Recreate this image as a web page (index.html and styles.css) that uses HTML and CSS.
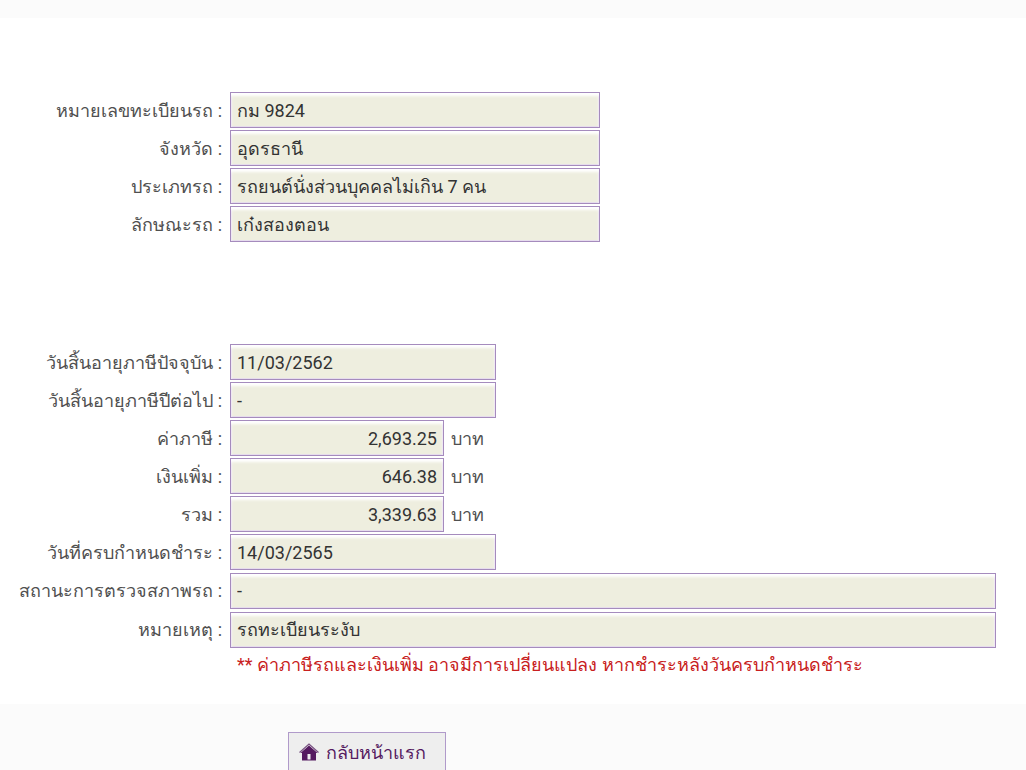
FILE: index.html
```
<!DOCTYPE html>
<html lang="th">
<head>
    <meta charset="UTF-8">
    <meta name="viewport" content="width=device-width, initial-scale=1.0">
    <title>ตรวจสอบภาษีรถ</title>
    <link rel="stylesheet" href="styles.css">
</head>
<body>
    <main class="content">
        <section class="form-section">
            <div class="form-row">
                <label for="plate">หมายเลขทะเบียนรถ :</label>
                <input class="medium" id="plate" type="text" value="กม 9824" readonly>
            </div>
            <div class="form-row">
                <label for="province">จังหวัด :</label>
                <input class="medium" id="province" type="text" value="อุดรธานี" readonly>
            </div>
            <div class="form-row">
                <label for="car-type">ประเภทรถ :</label>
                <input class="medium" id="car-type" type="text" value="รถยนต์นั่งส่วนบุคคลไม่เกิน 7 คน" readonly>
            </div>
            <div class="form-row">
                <label for="car-body">ลักษณะรถ :</label>
                <input class="medium" id="car-body" type="text" value="เก๋งสองตอน" readonly>
            </div>
        </section>

        <section class="form-section">
            <div class="form-row">
                <label for="tax-expire">วันสิ้นอายุภาษีปัจจุบัน :</label>
                <input class="date" id="tax-expire" type="text" value="11/03/2562" readonly>
            </div>
            <div class="form-row">
                <label for="tax-next">วันสิ้นอายุภาษีปีต่อไป :</label>
                <input class="date" id="tax-next" type="text" value="-" readonly>
            </div>
            <div class="form-row">
                <label for="tax">ค่าภาษี :</label>
                <input class="money" id="tax" type="text" value="2,693.25" readonly>
                <span class="unit">บาท</span>
            </div>
            <div class="form-row">
                <label for="extra">เงินเพิ่ม :</label>
                <input class="money" id="extra" type="text" value="646.38" readonly>
                <span class="unit">บาท</span>
            </div>
            <div class="form-row">
                <label for="total">รวม :</label>
                <input class="money" id="total" type="text" value="3,339.63" readonly>
                <span class="unit">บาท</span>
            </div>
            <div class="form-row">
                <label for="due-date">วันที่ครบกำหนดชำระ :</label>
                <input class="date" id="due-date" type="text" value="14/03/2565" readonly>
            </div>
            <div class="form-row wide">
                <label for="inspection">สถานะการตรวจสภาพรถ :</label>
                <input class="full" id="inspection" type="text" value="-" readonly>
            </div>
            <div class="form-row wide">
                <label for="remark">หมายเหตุ :</label>
                <input class="full" id="remark" type="text" value="รถทะเบียนระงับ" readonly>
            </div>
            <p class="notice">** ค่าภาษีรถและเงินเพิ่ม อาจมีการเปลี่ยนแปลง หากชำระหลังวันครบกำหนดชำระ</p>
        </section>
    </main>

    <div class="actions">
        <button class="home-btn" type="button">
            <svg class="home-icon" viewBox="0 0 20 18" aria-hidden="true">
                <path d="M0.5 9.5 L10 1 L19.5 9.5" fill="none" stroke="#775080" stroke-width="1.2"/>
                <path d="M1.5 10 L10 2.5 L18.5 10 H17 V17.5 H3 V10 Z" fill="#551a60"/>
                <path d="M8.5 11 H11.5 V16.5 H8.5 Z" fill="#eee"/>
            </svg>
            <span>กลับหน้าแรก</span>
        </button>
    </div>
</body>
</html>
```
FILE: styles.css
```
* {
    margin: 0;
    padding: 0;
    box-sizing: border-box;
}

body {
    font-family: Roboto, "Liberation Sans", sans-serif;
    font-size: 18px;
    color: #505050;
    background-color: #fbfbfb;
    padding-top: 18px;
}

.content {
    background-color: #fff;
    padding: 73px 30px 23px 10px;
}

.form-section + .form-section {
    margin-top: 100px;
}

.form-row {
    display: flex;
    align-items: center;
    height: 38px;
}

.form-row.wide {
    height: 39px;
}

.form-row label {
    flex: none;
    width: 212px;
    margin-right: 8px;
    text-align: right;
    white-space: nowrap;
}

.form-row input {
    height: 36px;
    padding: 0 6px;
    border: 1px solid #a58bbd;
    background-color: #eeeedf;
    box-shadow: inset 0 3px 3px #fff, inset 0 0 0 1px #e6dced;
    font-family: inherit;
    font-size: 18px;
    color: #333;
}

.medium {
    width: 370px;
}

.date {
    width: 266px;
}

.form-row .money {
    width: 214px;
    text-align: right;
}

.full {
    flex: 1;
    min-width: 0;
}

.unit {
    margin-left: 7px;
}

.notice {
    margin-left: 227px;
    line-height: 32px;
    color: #c82020;
}

.actions {
    padding: 28px 20px 0 288px;
}

.home-btn {
    display: flex;
    align-items: center;
    gap: 7px;
    width: 158px;
    height: 40px;
    padding: 0 10px;
    border: 1px solid #b09aca;
    background-color: #eee;
    font-family: inherit;
    font-size: 18px;
    color: #551a60;
    white-space: nowrap;
    cursor: pointer;
}

.home-icon {
    flex: none;
    width: 20px;
    height: 18px;
}
```
